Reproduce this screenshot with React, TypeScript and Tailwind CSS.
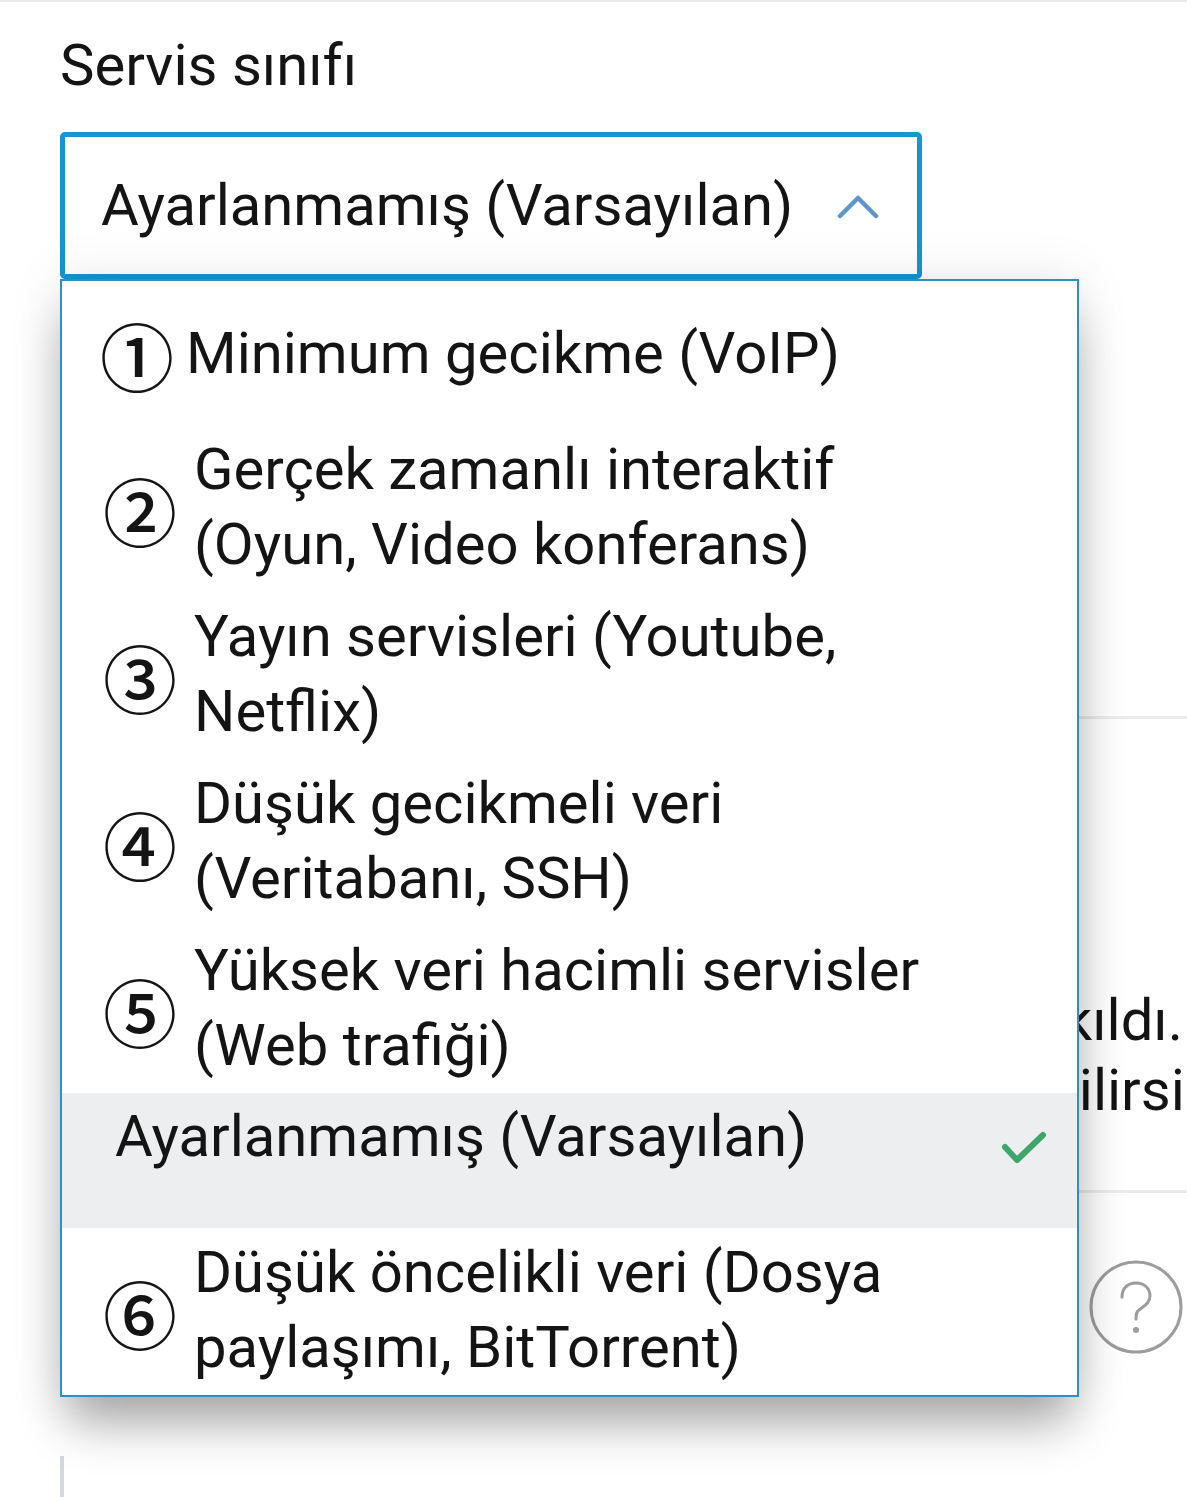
import React from 'react';

type Option = {
  mark?: string;
  lines: string[];
  selected?: boolean;
};

const options: Option[] = [
  { mark: '①', lines: ['Minimum gecikme (VoIP)'] },
  { mark: '②', lines: ['Gerçek zamanlı interaktif', '(Oyun, Video konferans)'] },
  { mark: '③', lines: ['Yayın servisleri (Youtube,', 'Netflix)'] },
  { mark: '④', lines: ['Düşük gecikmeli veri', '(Veritabanı, SSH)'] },
  { mark: '⑤', lines: ['Yüksek veri hacimli servisler', '(Web trafiği)'] },
  { lines: ['Ayarlanmamış (Varsayılan)'], selected: true },
  { mark: '⑥', lines: ['Düşük öncelikli veri (Dosya', 'paylaşımı, BitTorrent)'] },
];

const ChevronUp = () => (
  <svg width="42" height="26" viewBox="0 0 42 26" fill="none">
    <path d="M3 23 L21 5 L39 23" stroke="#5b95c9" strokeWidth="4.5" strokeLinecap="round" strokeLinejoin="round" />
  </svg>
);

const Check = () => (
  <svg width="46" height="34" viewBox="0 0 46 34" fill="none">
    <path d="M4 16 L16 29 L42 4" stroke="#3ea56b" strokeWidth="6" strokeLinecap="round" strokeLinejoin="round" />
  </svg>
);

const HelpIcon = () => (
  <svg width="96" height="96" viewBox="0 0 96 96" fill="none">
    <circle cx="48" cy="48" r="45" stroke="#9c9c9c" strokeWidth="3" />
    <path d="M34 38 C34 29 40 24 48 24 C56 24 62 29 62 37 C62 44 56 47 51 51 C48 53 48 56 48 60" stroke="#9c9c9c" strokeWidth="3" strokeLinecap="round" fill="none" />
    <circle cx="48" cy="71" r="3" fill="#9c9c9c" />
  </svg>
);

const OptionRow: React.FC<{ opt: Option; first: boolean }> = ({ opt, first }) => {
  if (opt.selected) {
    return (
      <div className="flex justify-between bg-[#eceef0] h-[135px] pl-[53px] pr-[30px] pt-[6px]">
        <span className="leading-[75px]">{opt.lines[0]}</span>
        <span className="mt-[32px]"><Check /></span>
      </div>
    );
  }
  if (first) {
    return (
      <div className="flex items-center h-[144px] pl-[38px]">
        <span className="w-[86px] text-[74px] leading-[75px] font-medium font-['Noto_Sans_CJK_SC',sans-serif]">{opt.mark}</span>
        <span className="leading-[75px]">{opt.lines[0]}</span>
      </div>
    );
  }
  return (
    <div className="flex items-center h-[167px] pl-[41px]">
      <span className="w-[91px] text-[74px] leading-[75px] font-medium font-['Noto_Sans_CJK_SC',sans-serif]">{opt.mark}</span>
      <div className="flex flex-col -mt-[4px]">
        {opt.lines.map((l) => (
          <span key={l} className="leading-[75px]">{l}</span>
        ))}
      </div>
    </div>
  );
};

export default function App() {
  return (
    <div className="relative h-[1497px] w-full overflow-hidden bg-white text-[#141414] text-[58px] font-['Roboto',sans-serif]">
      <div className="h-[2px] bg-[#e9e9e9]" />
      <div className="pl-[60px] pt-[26px]">
        <div className="leading-[75px]">Servis sınıfı</div>
        <div className="mt-[29px] flex items-center justify-between w-[862px] h-[147px] border-[5px] border-[#1496d2] rounded-[5px] pl-[36px] pr-[38px]">
          <span className="leading-[75px]">Ayarlanmamış (Varsayılan)</span>
          <ChevronUp />
        </div>

        {/* content behind the open menu */}
        <div className="mt-[437px] h-[3px] bg-[#ebebeb]" />
        <div className="mt-[266px] pl-[2px] whitespace-nowrap">
          <div className="flex justify-end pr-[4px] leading-[70px]">
            Sınıf varsayılan olarak bırakıldı.
          </div>
          <div className="flex justify-end mr-[-88px] leading-[70px]">
            Daha iyi bir deneyim elde edebilirsiniz.
          </div>
        </div>
        <div className="mt-[65px] h-[3px] bg-[#ebebeb]" />
        <div className="mt-[66px] flex justify-end pr-[3px]">
          <HelpIcon />
        </div>
        <div className="mt-[101px] w-[4px] h-[60px] bg-[#d5d9de]" />
      </div>

      {/* open dropdown menu */}
      <div className="absolute left-[60px] top-[279px] w-[1019px] border-2 border-[#2a92c0] bg-white shadow-[0_34px_46px_-8px_rgba(0,0,0,0.32),0_0_50px_rgba(0,0,0,0.1)]">
        {options.map((o, i) => (
          <OptionRow key={i} opt={o} first={i === 0} />
        ))}
      </div>
    </div>
  );
}
